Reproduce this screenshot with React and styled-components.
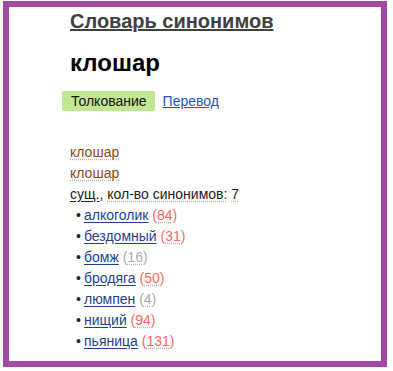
import styled, { createGlobalStyle } from 'styled-components';

const synonyms = [
  { word: 'алкоголик', count: 84, hot: true },
  { word: 'бездомный', count: 31, hot: true },
  { word: 'бомж', count: 16, hot: false },
  { word: 'бродяга', count: 50, hot: true },
  { word: 'люмпен', count: 4, hot: false },
  { word: 'нищий', count: 94, hot: true },
  { word: 'пьяница', count: 131, hot: true },
];

export default function App() {
  return (
    <>
      <GlobalStyle />
      <Frame>
        <Title href='#'>Словарь синонимов</Title>
        <Word>клошар</Word>
        <Tabs>
          <Tab>Толкование</Tab>
          <TabLink href='#'>Перевод</TabLink>
        </Tabs>
        <Body>
          <Line>
            <Lemma>клошар</Lemma>
          </Line>
          <Line>
            <Lemma>клошар</Lemma>
          </Line>
          <Line>
            <Pos>сущ.</Pos>, <Dotted>кол-во синонимов:</Dotted> <Dotted>7</Dotted>
          </Line>
          <List>
            {synonyms.map((s) => (
              <Item key={s.word}>
                <SynLink href='#'>{s.word}</SynLink>{' '}
                <Count hot={s.hot ? 1 : 0}>
                  (<Dotted>{s.count}</Dotted>)
                </Count>
              </Item>
            ))}
          </List>
        </Body>
      </Frame>
    </>
  );
}

const GlobalStyle = createGlobalStyle`
  body {
    margin: 0;
    background: #fff;
    font-family: 'Liberation Sans', Arial, sans-serif;
  }
`;

const Frame = styled.div`
  box-sizing: border-box;
  width: 384px;
  height: 366px;
  margin: 1px 0 0 3px;
  border: 6px solid #a349a4;
  padding: 3px 0 0 61px;
  display: flex;
  flex-direction: column;
  align-items: flex-start;
`;

const Title = styled.a`
  font-size: 20px;
  line-height: 23px;
  font-weight: bold;
  color: #404040;
  text-decoration: underline;
`;

const Word = styled.h1`
  margin: 16px 0 0;
  font-size: 24px;
  line-height: 28px;
  font-weight: bold;
  color: #000;
`;

const Tabs = styled.div`
  display: flex;
  align-items: center;
  gap: 8px;
  margin: 14px 0 0 -8px;
`;

const Tab = styled.span`
  background: #c2e793;
  border-radius: 2px;
  padding: 0 8px 0 9px;
  font-size: 14px;
  line-height: 20px;
  color: #111;
`;

const TabLink = styled.a`
  font-size: 14px;
  line-height: 20px;
  color: #2455b8;
  text-decoration: underline;
`;

const Body = styled.div`
  margin-top: 31px;
  font-size: 14px;
  line-height: 21px;
  color: #222;
`;

const Line = styled.div``;

const Dotted = styled.span`
  text-decoration: underline dotted #b5b5b5;
  text-underline-offset: 2px;
`;

const Lemma = styled(Dotted)`
  color: #8b4a1c;
`;

const Pos = styled.span`
  text-decoration: underline;
  text-underline-offset: 2px;
  color: #222;
`;

const List = styled.ul`
  list-style: none;
  margin: 0;
  padding: 0 0 0 6px;
`;

const Item = styled.li`
  &::before {
    content: '•';
    display: inline-block;
    width: 8px;
    color: #222;
  }
`;

const SynLink = styled.a`
  color: #1f3f8e;
  text-decoration: underline;
  text-underline-offset: 2px;
`;

const Count = styled.span`
  color: ${(p) => (p.hot ? '#f7695f' : '#aaaaaa')};
`;
